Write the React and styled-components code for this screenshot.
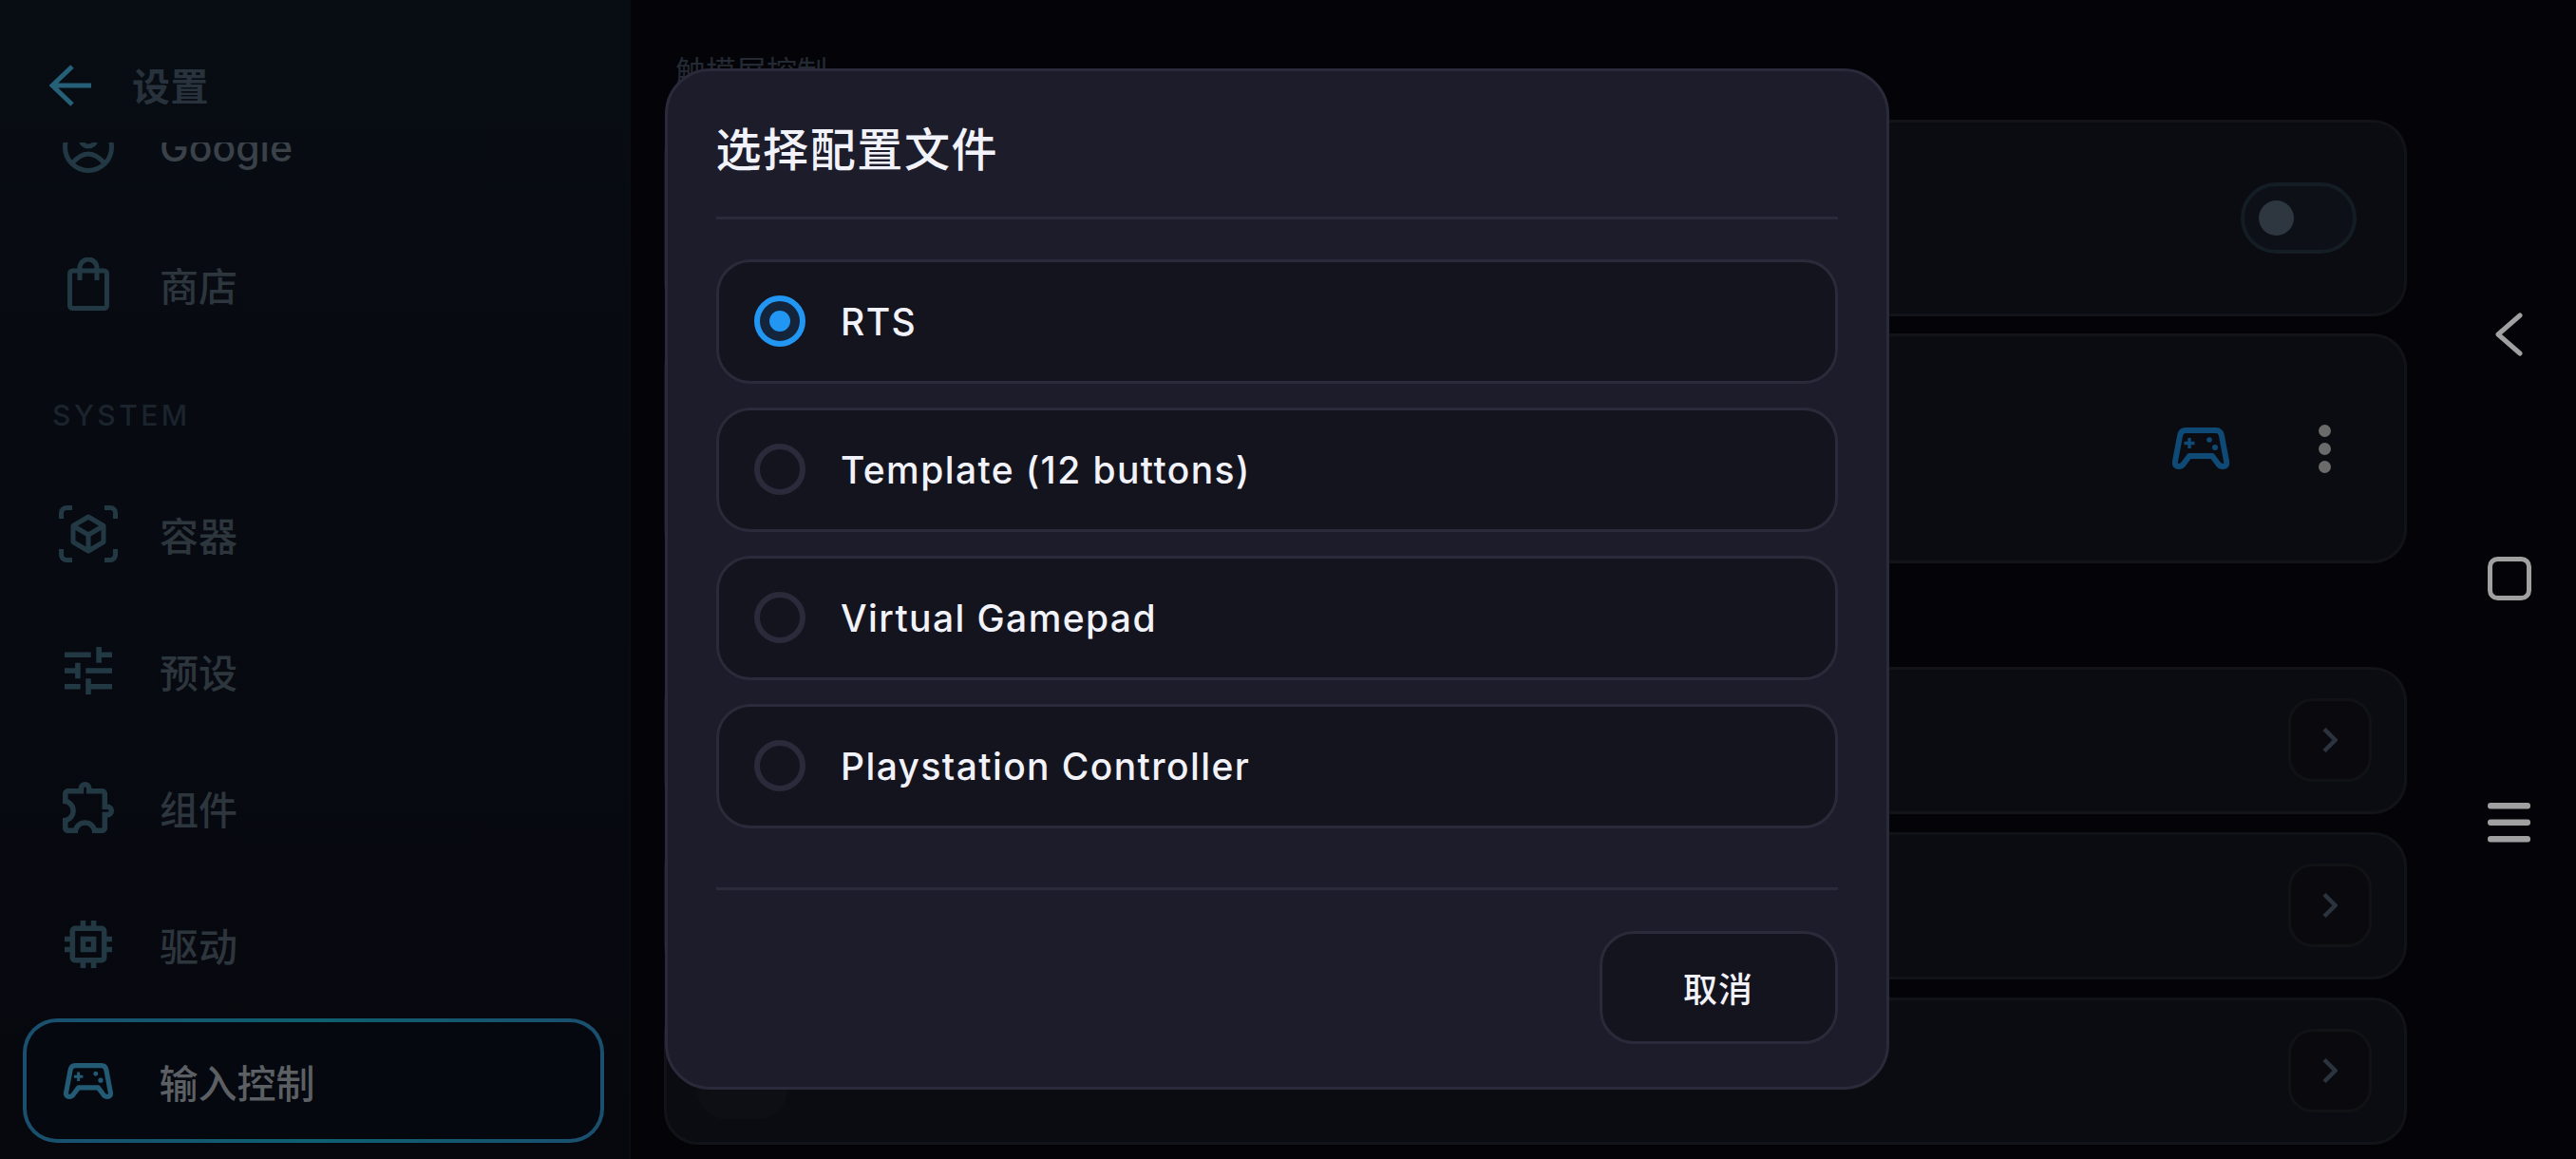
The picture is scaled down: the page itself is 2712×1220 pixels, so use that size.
import React from 'react';
import styled, { createGlobalStyle } from 'styled-components';

const GlobalStyle = createGlobalStyle`
    html, body {
        margin: 0;
        padding: 0;
        height: 1220px;
        overflow: hidden;
        background: #030308;
        font-family: Inter, "Noto Sans CJK SC", sans-serif;
    }
    * {
        box-sizing: border-box;
    }
`

const Page = styled.div`
    display: flex;
    width: 2712px;
    height: 1220px;
    overflow: hidden;
    background: #030308;
`

const Sidebar = styled.aside`
    display: flex;
    flex-direction: column;
    flex: 0 0 664px;
    height: 100%;
    background: linear-gradient(180deg, #080c13 0%, #06080e 100%);
    border-right: 2px solid #0a0c11;
`

const SideHeader = styled.header`
    display: flex;
    align-items: center;
    flex: 0 0 150px;
    padding: 30px 0 0 52px;
    gap: 43px;
`

const SideTitle = styled.div`
    margin-top: -3px;
    font-size: 40px;
    font-weight: 700;
    color: #28323c;
    letter-spacing: 0.5px;
`

const NavViewport = styled.nav`
    flex: 1;
    overflow: hidden;
`

const NavList = styled.div`
    display: flex;
    flex-direction: column;
    margin-top: -61px;
    padding: 0 26px 0 24px;
`

const NavRow = styled.div`
    display: flex;
    align-items: center;
    flex: 0 0 131px;
    margin-bottom: 13px;
    padding-left: ${props => (props.$active ? '33.5px' : '38px')};
    border-radius: 36px;
    border: ${props => (props.$active ? '4.5px solid transparent' : 'none')};
    background: ${props => (props.$active
        ? 'linear-gradient(#05080e, #05080e) padding-box, linear-gradient(90deg, #1a4f6e, #0e6070 50%, #1a4f6e) border-box'
        : 'transparent')};
`

const IconSlot = styled.div`
    display: flex;
    align-items: center;
    justify-content: center;
    flex: 0 0 62px;
    color: ${props => (props.$active ? '#235a74' : '#223944')};
`

const NavText = styled.div`
    margin-left: 44px;
    font-size: 41px;
    font-weight: 500;
    color: ${props => (props.$active ? '#5c6064' : props.$latin ? '#3a4149' : '#2d353d')};
`

const SectionLabel = styled.div`
    height: 119px;
    padding: 45px 0 0 31px;
    font-size: 30px;
    line-height: 30px;
    font-weight: 500;
    letter-spacing: 3.5px;
    color: #1b232c;
`

const Main = styled.main`
    flex: 1;
    min-width: 0;
    padding: 55px 0 0 35px;
`

const MainTitle = styled.div`
    padding-left: 12px;
    height: 71px;
    font-size: 32px;
    line-height: 42px;
    color: #232a33;
`

const Card = styled.div`
    display: flex;
    align-items: center;
    justify-content: ${props => (props.$spread ? 'space-between' : 'flex-end')};
    height: ${props => props.$height}px;
    margin-bottom: ${props => props.$gap}px;
    padding: ${props => props.$pad};
    background: #0b0c12;
    border: 3px solid #121319;
    border-radius: 36px;
`

const Toggle = styled.div`
    display: flex;
    align-items: center;
    width: 122px;
    height: 75px;
    padding-left: 15px;
    background: #0d1117;
    border: 4px solid #141c24;
    border-radius: 38px;
`

const Knob = styled.div`
    width: 37px;
    height: 37px;
    border-radius: 50%;
    background: #2e3740;
`

const CardActions = styled.div`
    display: flex;
    align-items: center;
    gap: 94px;
    color: #0e4a75;
`

const Dots = styled.div`
    display: flex;
    flex-direction: column;
    gap: 6px;
`

const Dot = styled.div`
    width: 13px;
    height: 13px;
    border-radius: 50%;
    background: #6b6b6b;
`

const Tile = styled.div`
    width: 95px;
    height: 100px;
    border-radius: 30px;
    background: #0e0f14;
`

const ArrowBox = styled.div`
    display: flex;
    align-items: center;
    justify-content: center;
    width: 88px;
    height: 88px;
    margin-top: -2px;
    background: #09090e;
    border: 3px solid #111216;
    border-radius: 26px;
    color: #2b343e;
`

const Rail = styled.div`
    display: flex;
    flex-direction: column;
    align-items: center;
    justify-content: center;
    flex: 0 0 178px;
    padding: 0 0 3px 37px;
    gap: 161px;
    color: #a0a0a0;
`

const RailButton = styled.div`
    display: flex;
    align-items: center;
    justify-content: center;
    height: 96px;
`

const Scrim = styled.div`
    position: fixed;
    inset: 0 24px 2px 0;
    display: flex;
    align-items: center;
    justify-content: center;
`

const Dialog = styled.section`
    display: flex;
    flex-direction: column;
    width: 1289px;
    height: 1075px;
    padding: 0 51px 45px;
    background: #1c1c2a;
    border: 3px solid #2a2a3a;
    border-radius: 48px;
`

const DialogTitle = styled.h2`
    flex: 0 0 156px;
    display: flex;
    align-items: center;
    margin: 0;
    padding-top: 6px;
    font-size: 48px;
    font-weight: 500;
    letter-spacing: 1.6px;
    color: #f2f2fa;
    border-bottom: 3px solid #2a2a3a;
`

const OptionList = styled.div`
    display: flex;
    flex-direction: column;
    gap: 25px;
    padding-top: 42px;
`

const Option = styled.div`
    display: flex;
    align-items: center;
    height: 131px;
    padding-left: 37.5px;
    gap: 37px;
    background: #14141e;
    border: 3px solid #2a2a3a;
    border-radius: 36px;
`

const Radio = styled.div`
    display: flex;
    align-items: center;
    justify-content: center;
    width: 54px;
    height: 54px;
    border-radius: 50%;
    border: 6px solid ${props => (props.$checked ? '#2196f3' : '#2a2a3a')};
    background: ${props => (props.$checked ? '#14253b' : 'transparent')};
`

const RadioDot = styled.div`
    width: 22px;
    height: 22px;
    border-radius: 50%;
    background: #2196f3;
`

const OptionText = styled.div`
    font-size: 39px;
    font-weight: 500;
    letter-spacing: 1.4px;
    color: #f2f2fa;
`

const DialogFooter = styled.div`
    display: flex;
    justify-content: flex-end;
    margin-top: 62px;
    padding-top: 43px;
    border-top: 3px solid #2a2a3a;
`

const CancelButton = styled.button`
    width: 251px;
    height: 119px;
    font-family: inherit;
    font-size: 36px;
    font-weight: 500;
    letter-spacing: 1px;
    color: #f2f2fa;
    background: #14141e;
    border: 3px solid #2a2a3a;
    border-radius: 36px;
`

const BackIcon = () => (
    <svg width="44" height="44" viewBox="0 0 44 44" fill="none" stroke="#266078" strokeWidth="5">
        <path d="M44 22H4M24 2L3 22l21 20" />
    </svg>
)

const GoogleIcon = () => (
    <svg width="54" height="54" viewBox="0 0 54 54" fill="none" stroke="currentColor" strokeWidth="5">
        <circle cx="27" cy="27" r="24.5" />
        <circle cx="27" cy="18" r="8" />
        <path d="M9 45Q27 23 45 45" />
    </svg>
)

const BagIcon = () => (
    <svg width="44" height="56" viewBox="0 0 44 56" fill="none" stroke="currentColor" strokeWidth="5">
        <rect x="2.5" y="14" width="39" height="39.5" rx="3" />
        <path d="M13 24V11a9 9 0 0 1 18 0v13" />
    </svg>
)

const ContainerIcon = () => (
    <svg width="62" height="60" viewBox="0 0 62 60" fill="none" stroke="currentColor" strokeWidth="5">
        <path d="M2.5 14V8a5.500 5.500 0 0 1 5.500-5.500h6M48 2.500h6a5.500 5.500 0 0 1 5.500 5.500v6M59.500 46v6a5.500 5.500 0 0 1-5.500 5.500h-6M14 57.500H8A5.500 5.500 0 0 1 2.500 52v-6" />
        <path d="M31 12l16 9.500v17L31 48l-16-9.500v-17zM15 21.500L31 31l16-9.500M31 31v17" strokeLinejoin="round" />
    </svg>
)

const TuneIcon = () => (
    <svg width="50" height="50" viewBox="3 3 18 18" fill="currentColor">
        <path d="M3 17v2h6v-2H3zM3 5v2h10V5H3zm10 16v-2h8v-2h-8v-2h-2v6h2zM7 9v2H3v2h4v2h2V9H7zm14 4v-2H11v2h10zm-6-4h2V7h4V5h-4V3h-2v6z" />
    </svg>
)

const PuzzleIcon = () => (
    <svg width="54" height="54" viewBox="2 2.500 19.500 19.500" fill="currentColor">
        <path d="M10.5 4.500c.28 0 .5.22.5.5v2h6v6h2c.28 0 .5.22.5.5s-.22.5-.5.5h-2v6h-2.120c-.68-1.750-2.390-3-4.380-3s-3.700 1.250-4.380 3H4v-2.120c1.750-.68 3-2.390 3-4.380 0-1.990-1.240-3.700-2.990-4.380L4 7h6V5c0-.28.22-.5.5-.5m0-2C9.120 2.500 8 3.620 8 5H4c-1.100 0-1.990.9-1.990 2v3.800h.29c1.490 0 2.700 1.210 2.700 2.700s-1.210 2.700-2.700 2.700H2V20c0 1.100.9 2 2 2h3.800v-.3c0-1.490 1.210-2.700 2.700-2.700s2.700 1.210 2.700 2.700v.3H17c1.100 0 2-.9 2-2v-4c1.380 0 2.500-1.120 2.500-2.500S20.380 11 19 11V7c0-1.100-.9-2-2-2h-4c0-1.380-1.120-2.500-2.500-2.500z" />
    </svg>
)

const ChipIcon = () => (
    <svg width="50" height="50" viewBox="3 3 18 18" fill="currentColor">
        <path d="M15 9H9v6h6V9zm-2 4h-2v-2h2v2zm8-2V9h-2V7c0-1.100-.9-2-2-2h-2V3h-2v2h-2V3H9v2H7c-1.100 0-2 .9-2 2v2H3v2h2v2H3v2h2v2c0 1.100.9 2 2 2h2v2h2v-2h2v2h2v-2h2c1.100 0 2-.9 2-2v-2h2v-2h-2v-2h2zm-4 6H7V7h10v10z" />
    </svg>
)

const GamepadIcon = ({ width = 60, height = 44 }) => (
    <svg width={width} height={height} viewBox="0 0 60 44" fill="none" stroke="currentColor" strokeWidth="6" strokeLinejoin="round">
        <path d="M14 3H46Q51 3 52 9L57 35.500Q58 41 53 41Q50 41 48 38L42 30H18L12 38Q10 41 7 41Q2 41 3 35.500L8 9Q9 3 14 3Z" />
        <path d="M18 11V22M12.500 16.500H23.500" strokeWidth="3.500" />
        <circle cx="39" cy="13" r="2.800" fill="currentColor" stroke="none" />
        <circle cx="45" cy="21" r="3" fill="currentColor" stroke="none" />
    </svg>
)

const ChevronRight = () => (
    <svg width="16" height="26" viewBox="0 0 16 26" fill="none" stroke="currentColor" strokeWidth="4.500">
        <path d="M2 1.500L13.500 13 2 24.500" />
    </svg>
)

const NavBack = () => (
    <svg width="29" height="46" viewBox="0 0 29 46" fill="none" stroke="currentColor" strokeWidth="5" strokeLinecap="round" strokeLinejoin="round">
        <path d="M26 3L3 23l23 20" />
    </svg>
)

const NavHome = () => (
    <svg width="46" height="46" viewBox="0 0 46 46" fill="none" stroke="currentColor" strokeWidth="5">
        <rect x="2.500" y="2.500" width="41" height="41" rx="8" />
    </svg>
)

const NavMenu = () => (
    <svg width="45" height="42" viewBox="0 0 45 42" fill="currentColor">
        <rect x="0" y="0" width="45" height="6.500" rx="3" />
        <rect x="0" y="17.500" width="45" height="6.500" rx="3" />
        <rect x="0" y="35" width="45" height="6.500" rx="3" />
    </svg>
)

const navItems = [
    { label: 'Google', icon: <GoogleIcon />, latin: true },
    { label: '商店', icon: <BagIcon /> },
    { section: 'SYSTEM' },
    { label: '容器', icon: <ContainerIcon /> },
    { label: '预设', icon: <TuneIcon /> },
    { label: '组件', icon: <PuzzleIcon /> },
    { label: '驱动', icon: <ChipIcon /> },
    { label: '输入控制', icon: <GamepadIcon width={52} height={38} />, active: true },
]

const profiles = ['RTS', 'Template (12 buttons)', 'Virtual Gamepad', 'Playstation Controller']

const App = () => {
    return (
        <Page>
            <GlobalStyle />
            <Sidebar>
                <SideHeader>
                    <BackIcon />
                    <SideTitle>设置</SideTitle>
                </SideHeader>
                <NavViewport>
                    <NavList>
                        {navItems.map(item => {
                            if (item.section) {
                                return <SectionLabel key={item.section}>{item.section}</SectionLabel>
                            }
                            return (
                                <NavRow key={item.label} $active={item.active}>
                                    <IconSlot $active={item.active}>{item.icon}</IconSlot>
                                    <NavText $active={item.active} $latin={item.latin}>{item.label}</NavText>
                                </NavRow>
                            )
                        })}
                    </NavList>
                </NavViewport>
            </Sidebar>
            <Main>
                <MainTitle>触摸屏控制</MainTitle>
                <Card $height={207} $gap={18} $pad="0 50px 0 0">
                    <Toggle>
                        <Knob />
                    </Toggle>
                </Card>
                <Card $height={242} $gap={109} $pad="0 77px 0 0">
                    <CardActions>
                        <GamepadIcon />
                        <Dots>
                            <Dot />
                            <Dot />
                            <Dot />
                        </Dots>
                    </CardActions>
                </Card>
                {[0, 1, 2].map(i => (
                    <Card key={i} $spread $height={155} $gap={19} $pad="0 34px 0 32px">
                        <Tile />
                        <ArrowBox>
                            <ChevronRight />
                        </ArrowBox>
                    </Card>
                ))}
            </Main>
            <Rail>
                <RailButton><NavBack /></RailButton>
                <RailButton><NavHome /></RailButton>
                <RailButton><NavMenu /></RailButton>
            </Rail>
            <Scrim>
                <Dialog>
                    <DialogTitle>选择配置文件</DialogTitle>
                    <OptionList>
                        {profiles.map((name, i) => (
                            <Option key={name}>
                                <Radio $checked={i === 0}>
                                    {i === 0 && <RadioDot />}
                                </Radio>
                                <OptionText>{name}</OptionText>
                            </Option>
                        ))}
                    </OptionList>
                    <DialogFooter>
                        <CancelButton>取消</CancelButton>
                    </DialogFooter>
                </Dialog>
            </Scrim>
        </Page>
    )
}

export default App;
